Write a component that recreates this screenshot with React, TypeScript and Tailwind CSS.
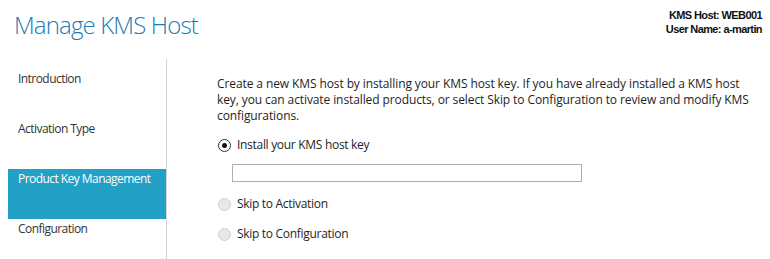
const steps = ["Introduction", "Activation Type", "Product Key Management", "Configuration"];

function Radio({ checked }: { checked?: boolean }) {
  if (checked) {
    return (
      <span className="flex h-[13px] w-[13px] items-center justify-center rounded-full border border-[#333] bg-white">
        <span className="h-[5px] w-[5px] rounded-full bg-[#111]" />
      </span>
    );
  }
  return <span className="h-[13px] w-[13px] rounded-full border border-[#cfcfcf] bg-[#e8e8e8]" />;
}

export default function App() {
  return (
    <div className="h-[259px] w-[770px] overflow-hidden bg-white font-['Open_Sans',sans-serif] text-[#1e1e1e]">
      <div className="flex h-[59px] items-start justify-between">
        <h1 className="pl-[14px] pt-[9px] text-[24px] font-light leading-[32px] tracking-[-0.85px] text-[#1d7cb0]">
          Manage KMS Host
        </h1>
        <div className="pr-[8px] pt-[8px] text-right font-['Liberation_Sans',sans-serif] text-[11px] font-bold leading-[14px] tracking-[-0.6px] text-[#111]">
          <div>KMS Host: WEB001</div>
          <div>User Name: a-martin</div>
        </div>
      </div>
      <div className="flex h-[200px]">
        <nav className="w-[167px] border-r border-[#d4d4d4] pl-[8px] pt-[10px] text-[12px] leading-[16px] tracking-[-0.55px] text-[#333]">
          {steps.map((s) => (
            <div
              key={s}
              className={
                s === "Product Key Management"
                  ? "h-[50px] bg-[#22a0c5] pl-[10px] pt-[2px] text-white"
                  : "h-[50px] pl-[10px] pt-[2px]"
              }
            >
              {s}
            </div>
          ))}
        </nav>
        <main className="flex-1 pl-[50px] pt-[17px] text-[12px] leading-[16px] tracking-[-0.3px]">
          <p className="w-[545px] tracking-[-0.1px]">
            Create a new KMS host by installing your KMS host key. If you have already installed a KMS host
            <br />
            key, you can activate installed products, or select Skip to Configuration to review and modify KMS
            <br />
            configurations.
          </p>
          <label className="mt-[13px] flex h-[16px] items-center gap-[6px] pl-[1px]">
            <Radio checked />
            <span>Install your KMS host key</span>
          </label>
          <input
            type="text"
            className="ml-[15px] mt-[11px] block h-[18px] w-[350px] border border-[#adadad] bg-white outline-none"
          />
          <label className="mt-[14px] flex h-[16px] items-center gap-[6px] pl-[1px]">
            <Radio />
            <span>Skip to Activation</span>
          </label>
          <label className="mt-[14px] flex h-[16px] items-center gap-[6px] pl-[1px]">
            <Radio />
            <span>Skip to Configuration</span>
          </label>
        </main>
      </div>
    </div>
  );
}
